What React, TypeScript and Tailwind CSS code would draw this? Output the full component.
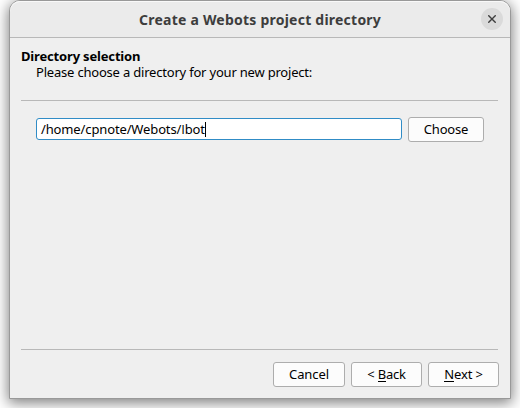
import type { ReactNode } from "react";

function Button({ children, className = "" }: { children: ReactNode; className?: string }) {
  return (
    <button
      type="button"
      className={`flex h-[25px] shrink-0 items-start justify-center whitespace-pre rounded-[3px] border border-[#adadad] bg-[#fcfcfc] pt-0.5 text-[13px] leading-[18px] text-black ${className}`}
    >
      {children}
    </button>
  );
}

function Mnemonic({ children }: { children: string }) {
  return <span className="h-[17px] border-b border-black leading-[18px]">{children}</span>;
}

export default function App() {
  return (
    <div className="h-[408px] w-[520px] overflow-hidden bg-white pl-[9px] font-['Noto_Sans',sans-serif] text-[13px] text-black">
      <div className="flex h-[399px] w-[502px] flex-col rounded-t-[11px] border border-[#999999] bg-[#efefef] shadow-[0_3px_14px_1px_rgba(0,0,0,0.5)]">
        <header className="flex h-[37px] shrink-0 items-center rounded-t-[10px] border-b border-[#b8b8b8] bg-[#ebebeb] pr-[7px] shadow-[inset_0_1px_0_#f9f9f9]">
          <h1 className="ml-[129px] w-[243px] whitespace-nowrap pt-0.5 text-[14px] font-bold leading-5 tracking-[0.23px] text-[#3d3d3d]">
            Create a Webots project directory
          </h1>
          <button type="button" aria-label="Close" className="ml-auto flex size-[22px] items-center justify-center rounded-full bg-[#dadada]">
            <svg width="8" height="8" viewBox="0 0 8 8" fill="none" stroke="#3d3d3d" strokeWidth="1.4">
              <path d="M0.3 0.3L7.7 7.7M7.7 0.3L0.3 7.7" />
            </svg>
          </button>
        </header>
        <main className="flex grow flex-col pl-[11px] pr-[12px]">
          <div className="h-[63px] border-b border-[#b8b8b8] pt-2.5 leading-4">
            <h2 className="whitespace-nowrap font-bold tracking-[-0.17px]">Directory selection</h2>
            <p className="whitespace-nowrap pl-[15px] tracking-[-0.2px]">Please choose a directory for your new project:</p>
          </div>
          <div className="flex grow items-start border-b border-[#b8b8b8] pl-[15px] pt-4">
            <div className="mt-px flex h-[22px] w-[366px] items-start rounded-[3px] border border-[#308cc6] bg-white pl-[4px] pt-0.5">
              <span className="whitespace-nowrap leading-4 tracking-[-0.13px]">
                /home/cpnote/Webots/<span className="font-['Open_Sans',sans-serif]">I</span>bot
              </span>
              <span className="mt-px h-[15px] w-px bg-black" />
            </div>
            <Button className="ml-1.5 w-[76px] tracking-[-0.2px]">Choose</Button>
          </div>
          <footer className="-mr-px flex h-[48px] shrink-0 items-start justify-end gap-1.5 pt-3">
            <Button className="w-[72px] tracking-[-0.1px]">Cancel</Button>
            <Button className="w-[71px] tracking-[-0.2px]">{"< "}<Mnemonic>B</Mnemonic>ack</Button>
            <Button className="w-[71px] tracking-[-0.1px]"><Mnemonic>N</Mnemonic>{"ext >"}</Button>
          </footer>
        </main>
      </div>
    </div>
  );
}
